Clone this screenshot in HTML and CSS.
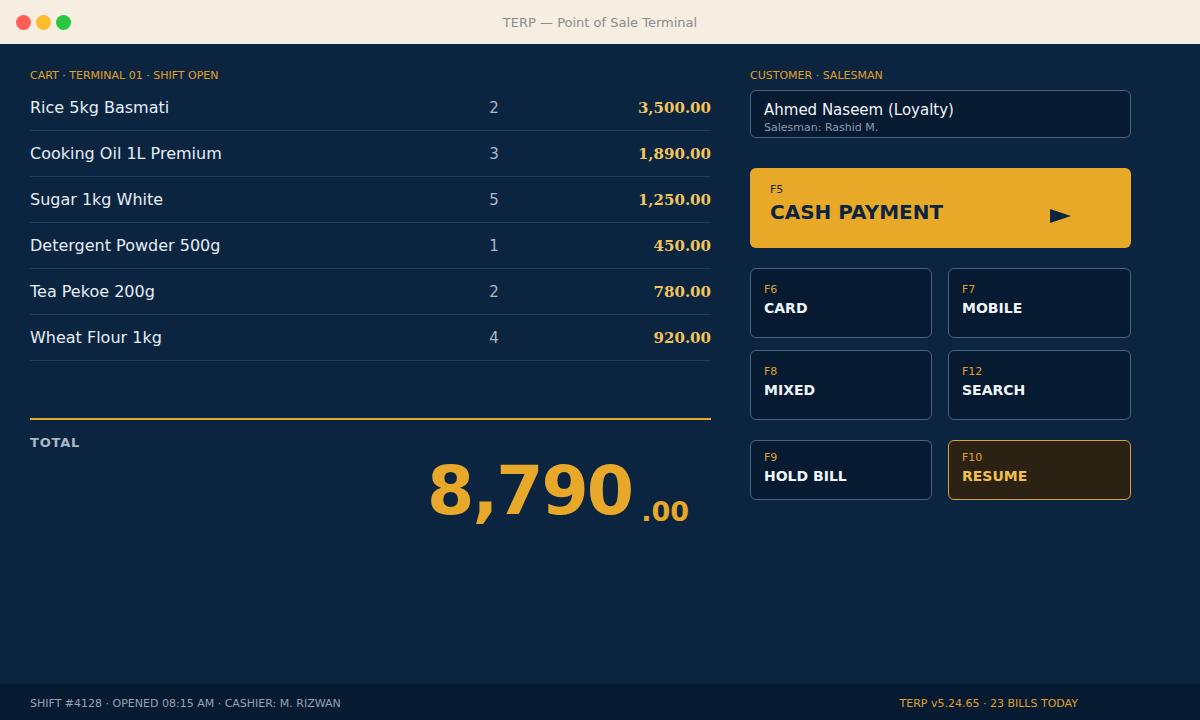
FILE: index.html
```html
<!DOCTYPE html>
<html lang="en">
<head>
  <meta charset="UTF-8">
  <meta name="viewport" content="width=device-width, initial-scale=1.0">
  <title>TERP — Point of Sale Terminal</title>
  <link rel="stylesheet" href="styles.css">
</head>
<body>
  <header class="titlebar">
    <div class="lights">
      <span class="light red"></span>
      <span class="light yellow"></span>
      <span class="light green"></span>
    </div>
    <div class="title">TERP — Point of Sale Terminal</div>
  </header>

  <main class="terminal">
    <section class="cart">
      <div class="section-label">CART · TERMINAL 01 · SHIFT OPEN</div>
      <div class="cart-rows">
        <div class="cart-row"><span class="item">Rice 5kg Basmati</span><span class="qty">2</span><span class="price">3,500.00</span></div>
        <div class="cart-row"><span class="item">Cooking Oil 1L Premium</span><span class="qty">3</span><span class="price">1,890.00</span></div>
        <div class="cart-row"><span class="item">Sugar 1kg White</span><span class="qty">5</span><span class="price">1,250.00</span></div>
        <div class="cart-row"><span class="item">Detergent Powder 500g</span><span class="qty">1</span><span class="price">450.00</span></div>
        <div class="cart-row"><span class="item">Tea Pekoe 200g</span><span class="qty">2</span><span class="price">780.00</span></div>
        <div class="cart-row"><span class="item">Wheat Flour 1kg</span><span class="qty">4</span><span class="price">920.00</span></div>
      </div>

      <div class="total">
        <div class="total-label">TOTAL</div>
        <div class="total-amount">
          <span class="whole">8,790</span>
          <span class="cents">.00</span>
        </div>
      </div>
    </section>

    <section class="side">
      <div class="section-label">CUSTOMER · SALESMAN</div>
      <div class="customer">
        <div class="customer-name">Ahmed Naseem (Loyalty)</div>
        <div class="customer-sub">Salesman: Rashid M.</div>
      </div>

      <button class="cash-btn" type="button">
        <span class="cash-text">
          <span class="key">F5</span>
          <span class="cash-label">CASH PAYMENT</span>
        </span>
        <svg class="cash-arrow" width="21" height="14" viewBox="0 0 21 14">
          <polygon points="0,0 21,7 0,14" fill="#0b2541"/>
        </svg>
      </button>

      <div class="pay-grid">
        <button class="pay-btn" type="button"><span class="key">F6</span><span class="pay-label">CARD</span></button>
        <button class="pay-btn" type="button"><span class="key">F7</span><span class="pay-label">MOBILE</span></button>
        <button class="pay-btn" type="button"><span class="key">F8</span><span class="pay-label">MIXED</span></button>
        <button class="pay-btn" type="button"><span class="key">F12</span><span class="pay-label">SEARCH</span></button>
      </div>

      <div class="bill-grid">
        <button class="pay-btn short" type="button"><span class="key">F9</span><span class="pay-label">HOLD BILL</span></button>
        <button class="pay-btn short resume" type="button"><span class="key">F10</span><span class="pay-label">RESUME</span></button>
      </div>
    </section>
  </main>

  <footer class="statusbar">
    <span class="status-left">SHIFT #4128 · OPENED 08:15 AM · CASHIER: M. RIZWAN</span>
    <span class="status-right">TERP v5.24.65 · 23 BILLS TODAY</span>
  </footer>
</body>
</html>
```

FILE: styles.css
```css
* {
  box-sizing: border-box;
}

body {
  margin: 0;
  height: 100vh;
  display: flex;
  flex-direction: column;
  font-family: "DejaVu Sans", sans-serif;
  background-color: #0b2541;
  color: #e6edf5;
  overflow: hidden;
}

/* window chrome */
.titlebar {
  height: 44px;
  flex-shrink: 0;
  background-color: #f5eee1;
  display: flex;
  align-items: center;
  position: relative;
}

.lights {
  display: flex;
  gap: 5px;
  padding-left: 16px;
}

.light {
  width: 15px;
  height: 15px;
  border-radius: 50%;
}

.red { background-color: #ff5f57; }
.yellow { background-color: #febc2e; }
.green { background-color: #28c840; }

.title {
  position: absolute;
  left: 0;
  right: 0;
  text-align: center;
  font-size: 13px;
  color: #8c8c8c;
}

/* main area */
.terminal {
  flex: 1;
  display: grid;
  grid-template-columns: 681px 381px;
  column-gap: 39px;
  padding: 25px 30px 0;
  align-items: start;
  align-content: start;
}

.section-label {
  font-size: 11px;
  line-height: 14px;
  color: #e0a028;
}

.cart .section-label {
  margin-bottom: 2px;
}

.cart-row {
  display: grid;
  grid-template-columns: 1fr 80px 177px;
  align-items: center;
  height: 46px;
  border-bottom: 1px solid #213b5a;
}

.item {
  font-size: 16px;
  color: #e6edf5;
}

.qty {
  text-align: center;
  font-size: 15px;
  color: #aab8cc;
}

.price {
  text-align: right;
  font-family: "DejaVu Serif", serif;
  font-weight: bold;
  font-size: 15px;
  color: #f2c45a;
}

.total {
  margin-top: 57px;
  border-top: 2px solid #e8a828;
  padding-top: 15px;
}

.total-label {
  font-size: 13px;
  line-height: 16px;
  font-weight: bold;
  color: #a9b6c6;
  letter-spacing: 0.8px;
}

.total-amount {
  display: flex;
  justify-content: flex-end;
  align-items: flex-end;
  margin-top: 6px;
  padding-right: 22px;
  color: #e8a82a;
  font-weight: bold;
}

.whole {
  font-size: 68px;
  line-height: 1;
  letter-spacing: -2px;
}

.cents {
  font-size: 27px;
  line-height: 1;
  margin-left: 9px;
}

/* side panel */
.side .section-label {
  margin-bottom: 7px;
}

.customer {
  height: 48px;
  background-color: #061a31;
  border: 1px solid #4b6286;
  border-radius: 6px;
  padding: 10px 13px 2px;
}

.customer-name {
  font-size: 15px;
  line-height: 18px;
  color: #f0f4f8;
}

.customer-sub {
  font-size: 11px;
  line-height: 14px;
  margin-top: 2px;
  color: #8d9bb0;
}

button {
  font-family: "DejaVu Sans", sans-serif;
  cursor: pointer;
  text-align: left;
  margin: 0;
}

.cash-btn {
  width: 100%;
  height: 80px;
  margin-top: 30px;
  background-color: #e8a828;
  border: none;
  border-radius: 6px;
  padding: 15px 60px 0 20px;
  display: flex;
  justify-content: space-between;
  align-items: flex-start;
}

.cash-text {
  display: flex;
  flex-direction: column;
}

.key {
  display: block;
  font-size: 11px;
  line-height: 14px;
}

.cash-btn .key {
  color: #1a2a40;
  margin-bottom: 3px;
}

.cash-label {
  font-size: 20px;
  line-height: 24px;
  font-weight: bold;
  color: #0b2541;
}

.cash-arrow {
  margin-top: 26px;
}

.pay-grid,
.bill-grid {
  display: grid;
  grid-template-columns: 182px 1fr;
  column-gap: 16px;
}

.pay-grid {
  margin-top: 20px;
  row-gap: 12px;
}

.bill-grid {
  margin-top: 20px;
}

.pay-btn {
  height: 70px;
  background-color: #061a31;
  border: 1px solid #4b6286;
  border-radius: 6px;
  padding: 14px 13px 0;
  display: flex;
  flex-direction: column;
  justify-content: flex-start;
}

.pay-btn.short {
  height: 60px;
  padding-top: 10px;
}

.pay-btn .key {
  color: #e0a028;
}

.pay-label {
  margin-top: 2px;
  font-size: 14px;
  line-height: 18px;
  font-weight: bold;
  color: #f0f4f8;
}

.pay-btn.resume {
  background-color: #2c2213;
  border-color: #e0a030;
}

.resume .pay-label {
  color: #f0c050;
}

/* status bar */
.statusbar {
  height: 36px;
  flex-shrink: 0;
  background-color: #061a31;
  display: flex;
  justify-content: space-between;
  align-items: center;
  padding: 2px 122px 0 30px;
  font-size: 11px;
}

.status-left {
  color: #95a3b5;
}

.status-right {
  color: #e0a028;
}
```
